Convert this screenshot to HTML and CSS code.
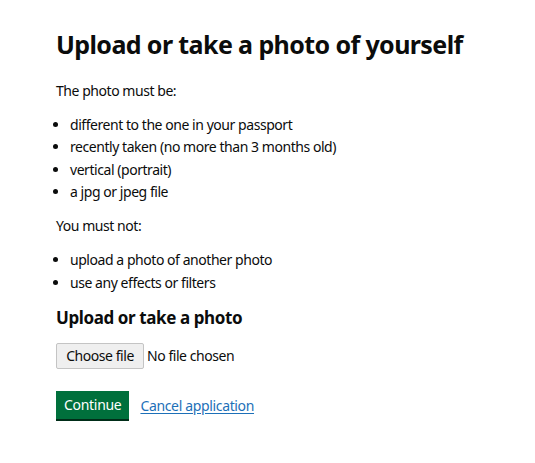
FILE: index.html
```html
<!DOCTYPE html>
<html lang="en">
<head>
<meta charset="utf-8">
<title>Upload or take a photo of yourself</title>
<link rel="stylesheet" href="styles.css">
</head>
<body>
<main class="page">
  <h1 class="heading-xl">Upload or take a photo of yourself</h1>
  <p class="body">The photo must be:</p>
  <ul class="bullets">
    <li>different to the one in your passport</li>
    <li>recently taken (no more than 3 months old)</li>
    <li>vertical (portrait)</li>
    <li>a jpg or jpeg file</li>
  </ul>
  <p class="body">You must not:</p>
  <ul class="bullets">
    <li>upload a photo of another photo</li>
    <li>use any effects or filters</li>
  </ul>
  <form class="upload-form">
    <label class="heading-m" for="photo">Upload or take a photo</label>
    <div class="file-row">
      <label class="file-button" for="photo">Choose file</label>
      <span class="file-status">No file chosen</span>
      <input class="file-input" id="photo" type="file" accept="image/jpeg">
    </div>
    <div class="actions">
      <button class="button" type="submit">Continue</button>
      <a class="link" href="#">Cancel application</a>
    </div>
  </form>
</main>
</body>
</html>
```
FILE: styles.css
```css
html, body {
  margin: 0;
  background: #ffffff;
}

.page {
  padding: 28px 56px 0;
  font-family: "Noto Sans", "Liberation Sans", sans-serif;
  color: #0b0c0c;
}

.heading-xl {
  margin: 0 0 21px;
  font-size: 25px;
  line-height: 32px;
  font-weight: 700;
  letter-spacing: -0.6px;
}

.body {
  margin: 0 0 14px;
  font-size: 14px;
  line-height: 20px;
  letter-spacing: -0.45px;
}

.bullets {
  margin: 0 0 14px;
  padding-left: 14px;
  font-size: 14px;
  line-height: 20px;
  letter-spacing: -0.45px;
}

.bullets li {
  margin-bottom: 2.4px;
}

.upload-form {
  display: flex;
  flex-direction: column;
}

.heading-m {
  display: block;
  margin: 0 0 14px;
  font-size: 17px;
  line-height: 22px;
  font-weight: 700;
  letter-spacing: -0.4px;
}

.file-row {
  display: flex;
  align-items: center;
  gap: 3px;
  margin-bottom: 22px;
  letter-spacing: -0.45px;
}

.file-input {
  display: none;
}

.file-button {
  box-sizing: border-box;
  width: 88px;
  height: 26px;
  display: flex;
  align-items: center;
  justify-content: center;
  font-size: 14px;
  background: #efefef;
  border: 1px solid #c4c4c4;
  border-radius: 2px;
  color: #0b0c0c;
}

.file-status {
  font-size: 14px;
}

.actions {
  display: flex;
  align-items: center;
  gap: 11px;
}

.button {
  box-sizing: border-box;
  height: 28px;
  padding: 0 8px;
  margin-bottom: 2px;
  font-family: inherit;
  font-size: 14px;
  letter-spacing: -0.3px;
  color: #ffffff;
  background: #00703c;
  border: 0;
  border-radius: 0;
  box-shadow: 0 2px 0 #002d18;
}

.link {
  font-size: 14px;
  letter-spacing: -0.35px;
  color: #1d70b8;
  text-decoration: underline;
  text-underline-offset: 2px;
}
```
